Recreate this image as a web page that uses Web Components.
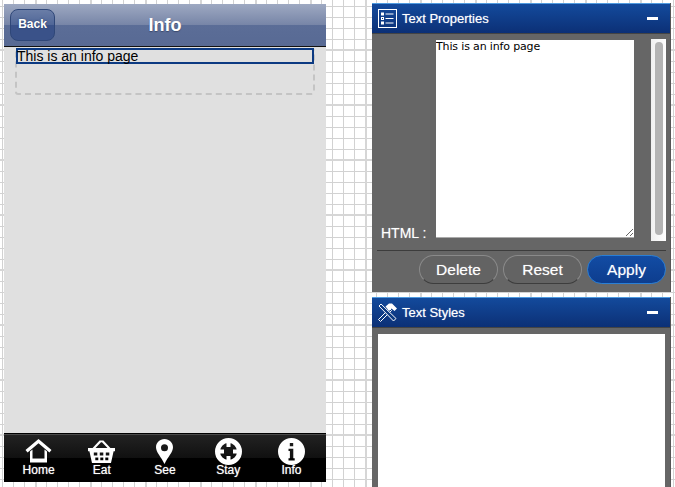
<!DOCTYPE html>
<html>
<head>
<meta charset="utf-8">
<title>Info</title>
<style>
    html, body {
        margin: 0;
        height: 487px;
        overflow: hidden;
    }
    body {
        font-family: "Liberation Sans", Arial, sans-serif;
        background-color: #fff;
        background-image:
            linear-gradient(to right, #d6d6d6 2px, transparent 2px),
            linear-gradient(to bottom, #d6d6d6 2px, transparent 2px),
            linear-gradient(to right, #d2d2d2 1px, transparent 1px),
            linear-gradient(to bottom, #d2d2d2 1px, transparent 1px);
        background-size: 55px 55px, 55px 55px, 11px 11px, 11px 11px;
        background-position: 35px 0, 0 49px, 2px 0, 0 6px;
    }
    .app {
        display: flex;
        align-items: flex-start;
        gap: 46px;
        padding: 3px 0 0 4px;
    }
    .side {
        display: flex;
        flex-direction: column;
        gap: 5px;
        width: 299px;
    }
</style>
</head>
<body>
<div class="app">
    <phone-view title="Info" back="Back">
        <info-block>This is an info page</info-block>
        <tab-bar slot="tabs">
            <tab-item icon="home">Home</tab-item>
            <tab-item icon="eat">Eat</tab-item>
            <tab-item icon="see">See</tab-item>
            <tab-item icon="stay">Stay</tab-item>
            <tab-item icon="info">Info</tab-item>
        </tab-bar>
    </phone-view>
    <div class="side">
        <side-panel title="Text Properties" icon="list">
            <text-form></text-form>
        </side-panel>
        <side-panel title="Text Styles" icon="tools">
            <style-list></style-list>
        </side-panel>
    </div>
</div>

<script>
const ICONS = {
    home: `<path d="M13.500 1 0.500 12 2.600 14.400 13.500 5.200 24.400 14.400 26.500 12z"/>
           <path fill-rule="evenodd" d="M5 13.500 7.500 11.500V20.400H19.500V11.500L22 13.500V24.500H5z"/>`,
    eat: `<path fill-rule="evenodd" d="M0 10h27v3.200h-1.400L23 25H4L1.400 13.200H0zM5.800 14.500v3h3.500v-3zm6 0v3h3.500v-3zm6 0v3h3.500v-3zM7.300 19.500v2.800h3v-2.800zm5 0v2.800h3v-2.800zm5 0v2.800h3v-2.800z"/>
          <path d="M4.600 10 11.600 2.400h3.800L22.400 10h-2.900L14 4.300h-1L7.500 10z"/>`,
    see: `<path fill-rule="evenodd" d="M13.500 1C8.600 1 5 4.700 5 9.300c0 5 5.200 9.700 8.500 16.700 3.300-7 8.500-11.700 8.500-16.700C22 4.700 18.400 1 13.500 1zm0 5.200a3.500 3.500 0 1 1 0 7 3.500 3.500 0 0 1 0-7z"/>`,
    stay: `<circle cx="13.500" cy="13.500" r="11" fill="none" stroke="#fff" stroke-width="5"/>
           <path d="M11.500 5h4v4h-4zM11.500 18h4v4h-4zM5 11.500h4v4H5zM18 11.500h4v4h-4z"/>`,
    info: `<path fill-rule="evenodd" d="M13.500 0a13.500 13.500 0 1 0 0 27 13.500 13.500 0 0 0 0-27zM11.800 5h3.400v3.300h-3.400zM10.500 10.800h4.800v9.400h1.400v2.300h-6.200v-2.300h1.400v-7.100h-1.400z"/>`
};

class PhoneView extends HTMLElement {
    constructor() {
        super();
        this.attachShadow({ mode: "open" });
        this.shadowRoot.innerHTML = `
            <style>
                :host {
                    display: flex;
                    flex-direction: column;
                    width: 322px;
                    height: 478px;
                    margin-top: 1px;
                    flex: none;
                    background: #e0e0e0;
                }
                header {
                    display: grid;
                    grid-template-columns: 1fr auto 1fr;
                    align-items: center;
                    height: 42px;
                    padding: 0 6px;
                    border-bottom: 1px solid #111;
                    background: linear-gradient(to bottom, #9ea9c2 0, #7785a7 50%, #5b6d97 50%, #586a94 100%);
                }
                button {
                    justify-self: start;
                    width: 45px;
                    height: 32px;
                    margin-top: -1px;
                    padding: 0 0 1px;
                    border: 1px solid #2f4778;
                    border-radius: 8px;
                    background: linear-gradient(to bottom, #6a7da7 0, #4f6697 50%, #3a5289 50%, #3a5289 100%);
                    color: #fff;
                    font: bold 12px "Liberation Sans", Arial, sans-serif;
                    text-shadow: 0 0 2px #2b3d66;
                }
                h1 {
                    margin: 0;
                    color: #fff;
                    font-size: 18px;
                    font-weight: bold;
                    text-shadow: 0 1px 1px #3c4a6d;
                }
                main {
                    flex: 1;
                    padding: 1px 11px 0;
                }
            </style>
            <header>
                <button type="button"></button>
                <h1></h1>
                <span></span>
            </header>
            <main><slot></slot></main>
            <slot name="tabs"></slot>
        `;
    }

    connectedCallback() {
        this.shadowRoot.querySelector("h1").textContent = this.getAttribute("title");
        this.shadowRoot.querySelector("button").textContent = this.getAttribute("back");
    }
}

class InfoBlock extends HTMLElement {
    constructor() {
        super();
        this.attachShadow({ mode: "open" });
        this.shadowRoot.innerHTML = `
            <style>
                :host {
                    display: block;
                    height: 47px;
                    box-sizing: border-box;
                    border: 2px dashed #c4c4c4;
                    border-top: none;
                    border-radius: 3px;
                }
                div {
                    height: 16px;
                    margin: 0 -1px;
                    box-sizing: border-box;
                    border: 2px solid #0c3a82;
                    color: #000;
                    font-size: 14px;
                    line-height: 13px;
                    text-indent: -1px;
                    white-space: nowrap;
                }
            </style>
            <div><slot></slot></div>
        `;
    }
}

class TabBar extends HTMLElement {
    constructor() {
        super();
        this.attachShadow({ mode: "open" });
        this.shadowRoot.innerHTML = `
            <style>
                :host {
                    display: grid;
                    grid-template-columns: repeat(5, 1fr);
                    height: 49px;
                    box-sizing: border-box;
                    padding: 0 3px;
                    border-top: 1px solid #000;
                    box-shadow: inset 0 1px 0 #4a4a4a;
                    background: linear-gradient(to bottom, #232323 0, #101010 50%, #000 50%, #000 100%);
                }
            </style>
            <slot></slot>
        `;
    }
}

class TabItem extends HTMLElement {
    constructor() {
        super();
        this.attachShadow({ mode: "open" });
        this.shadowRoot.innerHTML = `
            <style>
                :host {
                    display: flex;
                    flex-direction: column;
                    align-items: center;
                    padding-top: 4px;
                    color: #fff;
                    font-size: 12px;
                    line-height: 12px;
                    text-shadow: 0 0 1px rgba(255, 255, 255, 0.7);
                }
                svg {
                    width: 27px;
                    height: 27px;
                    margin-bottom: -1px;
                    fill: #fff;
                }
            </style>
            <svg viewBox="0 0 27 27"></svg>
            <slot></slot>
        `;
    }

    connectedCallback() {
        this.shadowRoot.querySelector("svg").innerHTML = ICONS[this.getAttribute("icon")];
    }
}

class SidePanel extends HTMLElement {
    constructor() {
        super();
        this.attachShadow({ mode: "open" });
        this.shadowRoot.innerHTML = `
            <style>
                :host {
                    display: block;
                    background: #666;
                    border-right: 1px solid #555;
                }
                header {
                    display: flex;
                    align-items: center;
                    gap: 5px;
                    height: 29px;
                    padding: 0 12px 0 6px;
                    border-top: 1px solid #4f9be0;
                    border-bottom: 1px solid #444;
                    background: linear-gradient(to bottom, #134a9c, #0c3076);
                    color: #fff;
                    font-size: 13px;
                    text-shadow: 0 0 1px rgba(255, 255, 255, 0.6);
                }
                svg {
                    width: 19px;
                    height: 19px;
                    flex: none;
                    fill: none;
                    stroke: #fff;
                }
                span {
                    flex: 1;
                }
                i {
                    width: 11px;
                    height: 3px;
                    background: #fff;
                }
            </style>
            <header>
                <svg viewBox="0 0 19 19"></svg>
                <span></span>
                <i></i>
            </header>
            <slot></slot>
        `;
    }

    connectedCallback() {
        this.shadowRoot.querySelector("span").textContent = this.getAttribute("title");
        const icon = this.shadowRoot.querySelector("svg");
        if (this.getAttribute("icon") === "list") {
            icon.innerHTML = `
                <rect x="0.500" y="0.500" width="18" height="18"/>
                <rect x="3.500" y="4" width="2" height="2"/>
                <rect x="3.500" y="8.500" width="2" height="2"/>
                <rect x="3.500" y="13" width="2" height="2"/>
                <path d="M7.500 5h8M7.500 9.500h8M7.500 14h8"/>`;
        } else {
            icon.innerHTML = `
                <path d="M2.500 18.500 0.500 16.500 11.500 5.500 13.500 7.500z" fill="#0c3a82"/>
                <path d="M3 1 1 3 15.500 18 18 15.500z" fill="#0c3a82"/>
                <path d="M7.500 3.500 11 0.500h3L19 5.500 16.500 8 13.500 5.500 11 8z" fill="#fff" stroke="none"/>`;
        }
    }
}

class TextForm extends HTMLElement {
    constructor() {
        super();
        this.attachShadow({ mode: "open" });
        this.shadowRoot.innerHTML = `
            <style>
                :host {
                    display: block;
                    height: 258px;
                    box-sizing: border-box;
                    padding: 5px 4px 0 5px;
                }
                .field {
                    display: flex;
                    align-items: flex-start;
                    height: 211px;
                    padding-left: 4px;
                    border-bottom: 1px solid #3c3c3c;
                }
                label {
                    width: 55px;
                    margin-top: 185px;
                    color: #fff;
                    font-size: 14px;
                    line-height: 18px;
                    flex: none;
                    text-shadow: 0 0 1px rgba(255, 255, 255, 0.5);
                }
                textarea {
                    width: 198px;
                    height: 198px;
                    margin: 1px 17px 0 0;
                    padding: 0;
                    box-sizing: border-box;
                    border: none;
                    border-bottom: 1px solid #aaa;
                    border-radius: 0;
                    outline: none;
                    background: #fff;
                    color: #000;
                    font: 11px/14px "DejaVu Sans", Verdana, sans-serif;
                    letter-spacing: -0.15px;
                    flex: none;
                }
                .scroll {
                    width: 15px;
                    height: 202px;
                    box-sizing: border-box;
                    padding: 3px 3px 3px 4px;
                    background: linear-gradient(to right, #f0f0f0, #fff);
                    flex: none;
                }
                .scroll div {
                    height: 193px;
                    border-radius: 4px;
                    background: #b4b4b4;
                }
                .actions {
                    display: flex;
                    justify-content: flex-end;
                    gap: 5px;
                    padding-top: 4px;
                }
            </style>
            <div class="field">
                <label for="html">HTML :</label>
                <textarea id="html">This is an info page</textarea>
                <div class="scroll"><div></div></div>
            </div>
            <div class="actions">
                <pill-button>Delete</pill-button>
                <pill-button>Reset</pill-button>
                <pill-button primary>Apply</pill-button>
            </div>
        `;
    }
}

class PillButton extends HTMLElement {
    constructor() {
        super();
        this.attachShadow({ mode: "open" });
        this.shadowRoot.innerHTML = `
            <style>
                :host {
                    display: flex;
                    align-items: center;
                    justify-content: center;
                    width: 79px;
                    height: 29px;
                    box-sizing: border-box;
                    border: 1px solid #8a8a8a;
                    border-bottom-color: #3d3d3d;
                    border-radius: 15px;
                    background: #636363;
                    color: #fff;
                    font-size: 15.5px;
                    text-shadow: 0 0 1px rgba(255, 255, 255, 0.5);
                }
                :host([primary]) {
                    border-color: #2a7fd6;
                    background: linear-gradient(to bottom, #124ca4, #0d3d8e);
                }
            </style>
            <slot></slot>
        `;
    }
}

class StyleList extends HTMLElement {
    constructor() {
        super();
        this.attachShadow({ mode: "open" });
        this.shadowRoot.innerHTML = `
            <style>
                :host {
                    display: block;
                    height: 153px;
                    padding: 6px 5px 0 6px;
                }
                div {
                    height: 100%;
                    background: #fff;
                }
            </style>
            <div></div>
        `;
    }
}

customElements.define("phone-view", PhoneView);
customElements.define("info-block", InfoBlock);
customElements.define("tab-bar", TabBar);
customElements.define("tab-item", TabItem);
customElements.define("side-panel", SidePanel);
customElements.define("text-form", TextForm);
customElements.define("pill-button", PillButton);
customElements.define("style-list", StyleList);
</script>
</body>
</html>
